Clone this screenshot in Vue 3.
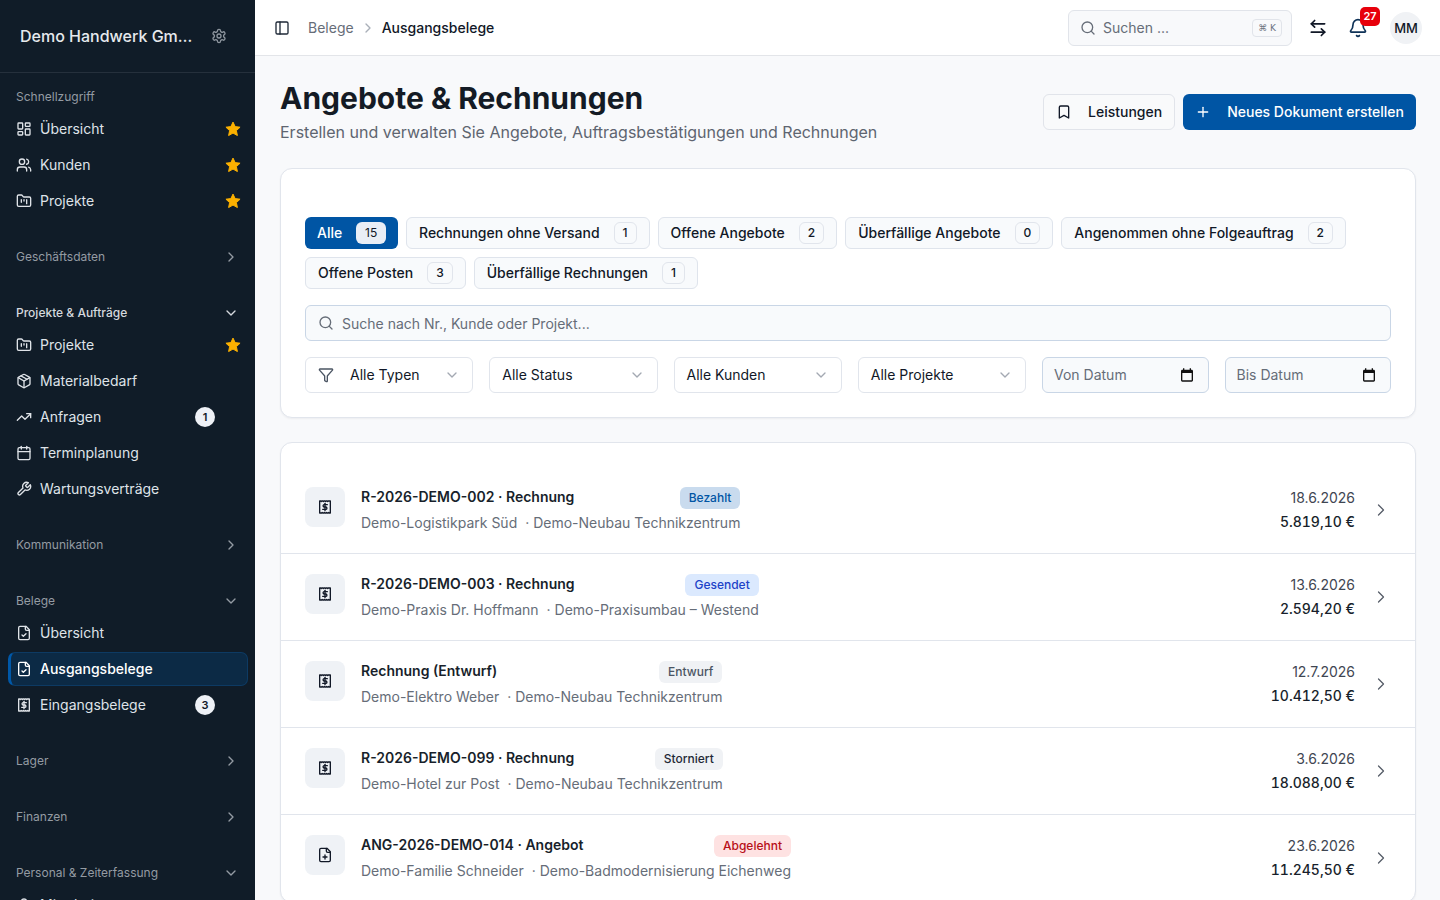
<script setup>
import { h } from 'vue'

const P = {
  dashboard: ['M4 3h5a1 1 0 0 1 1 1v7a1 1 0 0 1-1 1H4a1 1 0 0 1-1-1V4a1 1 0 0 1 1-1z', 'M15 3h5a1 1 0 0 1 1 1v3a1 1 0 0 1-1 1h-5a1 1 0 0 1-1-1V4a1 1 0 0 1 1-1z', 'M15 12h5a1 1 0 0 1 1 1v7a1 1 0 0 1-1 1h-5a1 1 0 0 1-1-1v-7a1 1 0 0 1 1-1z', 'M4 16h5a1 1 0 0 1 1 1v3a1 1 0 0 1-1 1H4a1 1 0 0 1-1-1v-3a1 1 0 0 1 1-1z'],
  users: ['M16 21v-2a4 4 0 0 0-4-4H6a4 4 0 0 0-4 4v2', 'M5 7a4 4 0 1 0 8 0a4 4 0 1 0-8 0', 'M22 21v-2a4 4 0 0 0-3-3.87', 'M16 3.13a4 4 0 0 1 0 7.75'],
  folder: ['M4 20h16a2 2 0 0 0 2-2V8a2 2 0 0 0-2-2h-7.93a2 2 0 0 1-1.66-.9l-.82-1.2A2 2 0 0 0 7.93 3H4a2 2 0 0 0-2 2v13c0 1.1.9 2 2 2Z', 'M8 10v4', 'M12 10v2', 'M16 10v6'],
  gear: ['M12.22 2h-.44a2 2 0 0 0-2 2v.18a2 2 0 0 1-1 1.73l-.43.25a2 2 0 0 1-2 0l-.15-.08a2 2 0 0 0-2.73.73l-.22.38a2 2 0 0 0 .73 2.73l.15.1a2 2 0 0 1 1 1.72v.51a2 2 0 0 1-1 1.74l-.15.09a2 2 0 0 0-.73 2.73l.22.38a2 2 0 0 0 2.73.73l.15-.08a2 2 0 0 1 2 0l.43.25a2 2 0 0 1 1 1.73V20a2 2 0 0 0 2 2h.44a2 2 0 0 0 2-2v-.18a2 2 0 0 1 1-1.73l.43-.25a2 2 0 0 1 2 0l.15.08a2 2 0 0 0 2.73-.73l.22-.39a2 2 0 0 0-.73-2.73l-.15-.08a2 2 0 0 1-1-1.74v-.5a2 2 0 0 1 1-1.74l.15-.09a2 2 0 0 0 .73-2.73l-.22-.38a2 2 0 0 0-2.73-.73l-.15.08a2 2 0 0 1-2 0l-.43-.25a2 2 0 0 1-1-1.73V4a2 2 0 0 0-2-2z', 'M9 12a3 3 0 1 0 6 0a3 3 0 1 0-6 0'],
  pkg: ['M11 21.73a2 2 0 0 0 2 0l7-4A2 2 0 0 0 21 16V8a2 2 0 0 0-1-1.73l-7-4a2 2 0 0 0-2 0l-7 4A2 2 0 0 0 3 8v8a2 2 0 0 0 1 1.73z', 'M12 22V12', 'm3.3 7 8.7 5 8.7-5', 'm7.5 4.27 9 5.15'],
  trend: ['M22 7 13.5 15.5 8.5 10.5 2 17', 'M16 7h6v6'],
  calendar: ['M8 2v4', 'M16 2v4', 'M5 4h14a2 2 0 0 1 2 2v14a2 2 0 0 1-2 2H5a2 2 0 0 1-2-2V6a2 2 0 0 1 2-2z', 'M3 10h18'],
  wrench: ['M14.7 6.3a1 1 0 0 0 0 1.4l1.6 1.6a1 1 0 0 0 1.4 0l3.77-3.77a6 6 0 0 1-7.94 7.94l-6.91 6.91a2.12 2.12 0 0 1-3-3l6.91-6.91a6 6 0 0 1 7.94-7.94l-3.76 3.76z'],
  filecheck: ['M15 2H6a2 2 0 0 0-2 2v16a2 2 0 0 0 2 2h12a2 2 0 0 0 2-2V7Z', 'M14 2v4a2 2 0 0 0 2 2h4', 'm9 15 2 2 4-4'],
  fileplus: ['M15 2H6a2 2 0 0 0-2 2v16a2 2 0 0 0 2 2h12a2 2 0 0 0 2-2V7Z', 'M14 2v4a2 2 0 0 0 2 2h4', 'M9 15h6', 'M12 18v-6'],
  receipt: ['M4 3h1.6l.8.8.8-.8h1.6l.8.8.8-.8h1.6l.8.8.8-.8h1.6l.8.8.8-.8H20v18h-1.6l-.8-.8-.8.8h-1.6l-.8-.8-.8.8h-1.6l-.8-.8-.8.8H8.6l-.8-.8-.8.8H4z', 'M12 6.5v11', 'M15.5 8.5H10.5a1.8 1.8 0 0 0 0 3.5h3a1.8 1.8 0 0 1 0 3.5H8.5'],
  user: ['M19 21v-2a4 4 0 0 0-4-4H9a4 4 0 0 0-4 4v2', 'M8 7a4 4 0 1 0 8 0a4 4 0 1 0-8 0'],
  panel: ['M5 3h14a2 2 0 0 1 2 2v14a2 2 0 0 1-2 2H5a2 2 0 0 1-2-2V5a2 2 0 0 1 2-2z', 'M9 3v18'],
  swap: ['M8 3 4 7l4 4', 'M4 7h16', 'm16 21 4-4-4-4', 'M20 17H4'],
  bell: ['M10.268 21a2 2 0 0 0 3.464 0', 'M3.262 15.326A1 1 0 0 0 4 17h16a1 1 0 0 0 .74-1.673C19.41 13.956 18 12.499 18 8A6 6 0 0 0 6 8c0 4.499-1.411 5.956-2.738 7.326'],
  search: ['M3 11a8 8 0 1 0 16 0a8 8 0 1 0-16 0', 'm21 21-4.3-4.3'],
  bookmark: ['m19 21-7-4-7 4V5a2 2 0 0 1 2-2h10a2 2 0 0 1 2 2v16z'],
  plus: ['M5 12h14', 'M12 5v14'],
  funnel: ['M10 20a1 1 0 0 0 .553.895l2 1A1 1 0 0 0 14 21v-7a2 2 0 0 1 .517-1.341L21.74 4.67A1 1 0 0 0 21 3H3a1 1 0 0 0-.742 1.67l7.225 7.989A2 2 0 0 1 10 14z'],
  right: ['m9 18 6-6-6-6'],
  down: ['m6 9 6 6 6-6'],
}

const Icon = (props) =>
  h('svg', { viewBox: '0 0 24 24', width: props.size || 16, height: props.size || 16, fill: 'none', stroke: 'currentColor', 'stroke-width': props.sw || 2, 'stroke-linecap': 'round', 'stroke-linejoin': 'round', style: { flex: 'none', display: 'block' } },
    P[props.name].map((d) => h('path', { d })))
Icon.props = ['name', 'size', 'sw']

const groups = [
  { label: 'Schnellzugriff', first: true, plain: true, items: [
    { icon: 'dashboard', text: 'Übersicht', star: true },
    { icon: 'users', text: 'Kunden', star: true },
    { icon: 'folder', text: 'Projekte', star: true },
  ] },
  { label: 'Geschäftsdaten', items: [] },
  { label: 'Projekte & Aufträge', open: true, bright: true, items: [
    { icon: 'folder', text: 'Projekte', star: true },
    { icon: 'pkg', text: 'Materialbedarf' },
    { icon: 'trend', text: 'Anfragen', badge: 1 },
    { icon: 'calendar', text: 'Terminplanung' },
    { icon: 'wrench', text: 'Wartungsverträge' },
  ] },
  { label: 'Kommunikation', items: [] },
  { label: 'Belege', open: true, items: [
    { icon: 'filecheck', text: 'Übersicht' },
    { icon: 'filecheck', text: 'Ausgangsbelege', active: true },
    { icon: 'receipt', text: 'Eingangsbelege', badge: 3 },
  ] },
  { label: 'Lager', items: [] },
  { label: 'Finanzen', items: [] },
  { label: 'Personal & Zeiterfassung', open: true, items: [
    { icon: 'user', text: 'Mitarbeiter' },
  ] },
]

const tabs = [
  { text: 'Alle', n: 15, active: true },
  { text: 'Rechnungen ohne Versand', n: 1 },
  { text: 'Offene Angebote', n: 2 },
  { text: 'Überfällige Angebote', n: 0 },
  { text: 'Angenommen ohne Folgeauftrag', n: 2 },
  { text: 'Offene Posten', n: 3 },
  { text: 'Überfällige Rechnungen', n: 1 },
]

const selects = [
  { text: 'Alle Typen', funnel: true },
  { text: 'Alle Status' },
  { text: 'Alle Kunden' },
  { text: 'Alle Projekte' },
]

const rows = [
  { icon: 'receipt', title: 'R-2026-DEMO-002 · Rechnung', status: 'Bezahlt', kind: 'paid', customer: 'Demo-Logistikpark Süd', project: 'Demo-Neubau Technikzentrum', date: '18.6.2026', amount: '5.819,10 €' },
  { icon: 'receipt', title: 'R-2026-DEMO-003 · Rechnung', status: 'Gesendet', kind: 'sent', customer: 'Demo-Praxis Dr. Hoffmann', project: 'Demo-Praxisumbau – Westend', date: '13.6.2026', amount: '2.594,20 €' },
  { icon: 'receipt', title: 'Rechnung (Entwurf)', status: 'Entwurf', kind: 'draft', customer: 'Demo-Elektro Weber', project: 'Demo-Neubau Technikzentrum', date: '12.7.2026', amount: '10.412,50 €' },
  { icon: 'receipt', title: 'R-2026-DEMO-099 · Rechnung', status: 'Storniert', kind: 'void', customer: 'Demo-Hotel zur Post', project: 'Demo-Neubau Technikzentrum', date: '3.6.2026', amount: '18.088,00 €' },
  { icon: 'fileplus', title: 'ANG-2026-DEMO-014 · Angebot', status: 'Abgelehnt', kind: 'rejected', customer: 'Demo-Familie Schneider', project: 'Demo-Badmodernisierung Eichenweg', date: '23.6.2026', amount: '11.245,50 €' },
]
</script>

<template>
  <div class="app">
    <aside class="side">
      <div class="brand">
        <span class="brand-name">Demo Handwerk GmbH</span>
        <Icon name="gear" class="brand-gear" />
      </div>
      <nav class="nav">
        <section v-for="g in groups" :key="g.label" class="group" :class="{ closed: !g.items.length, first: g.first }">
          <div class="glabel" :class="{ bright: g.bright }">
            <span>{{ g.label }}</span>
            <Icon v-if="!g.plain" :name="g.open ? 'down' : 'right'" />
          </div>
          <div v-if="g.items.length" class="items">
            <a v-for="it in g.items" :key="it.text" class="item" :class="{ active: it.active }">
              <Icon :name="it.icon" />
              <span class="item-text">{{ it.text }}</span>
              <span v-if="it.badge" class="nav-badge">{{ it.badge }}</span>
              <svg v-if="it.star" class="star" viewBox="0 0 24 24" width="16" height="16"><path d="M12 1.6l3.2 6.8 7.4.9-5.5 5.1 1.5 7.4L12 18.1l-6.6 3.7 1.5-7.4L1.400 9.300l7.4-.9z" fill="#fbb000" stroke="#fbb000" stroke-width="1.500" stroke-linejoin="round"/></svg>
            </a>
          </div>
        </section>
      </nav>
    </aside>

    <div class="main">
      <header class="top">
        <span class="panel-btn"><Icon name="panel" /></span>
        <span class="crumb">Belege</span>
        <Icon name="right" class="crumb-sep" />
        <span class="crumb current">Ausgangsbelege</span>
        <div class="top-right">
          <div class="gsearch">
            <Icon name="search" class="gsearch-ic" />
            <span class="gsearch-text">Suchen ...</span>
            <kbd>⌘ K</kbd>
          </div>
          <span class="swap"><Icon name="swap" :size="20" /></span>
          <span class="bell">
            <Icon name="bell" :size="20" />
            <b class="bell-count">27</b>
          </span>
          <span class="avatar">MM</span>
        </div>
      </header>

      <main class="content">
        <div class="head">
          <div>
            <h1>Angebote &amp; Rechnungen</h1>
            <p>Erstellen und verwalten Sie Angebote, Auftragsbestätigungen und Rechnungen</p>
          </div>
          <div class="actions">
            <button class="btn ghost"><Icon name="bookmark" /><span>Leistungen</span></button>
            <button class="btn primary"><Icon name="plus" /><span>Neues Dokument erstellen</span></button>
          </div>
        </div>

        <section class="card filters">
          <div class="tabs">
            <button v-for="t in tabs" :key="t.text" class="tab" :class="{ active: t.active }">
              <span>{{ t.text }}</span>
              <span class="count">{{ t.n }}</span>
            </button>
          </div>
          <div class="search">
            <Icon name="search" class="search-ic" />
            <span class="search-text">Suche nach Nr., Kunde oder Projekt...</span>
          </div>
          <div class="fgrid">
            <div v-for="s in selects" :key="s.text" class="select">
              <Icon v-if="s.funnel" name="funnel" class="funnel" />
              <span class="select-text">{{ s.text }}</span>
              <Icon name="down" class="select-chev" />
            </div>
            <div v-for="d in ['Von Datum', 'Bis Datum']" :key="d" class="date">
              <span>{{ d }}</span>
              <svg viewBox="0 0 24 24" width="16" height="16" fill="#111"><path d="M19 4h-1V2h-2v2H8V2H6v2H5c-1.110 0-2 .9-2 2v14a2 2 0 0 0 2 2h14c1.100 0 2-.9 2-2V6c0-1.100-.9-2-2-2zm0 16H5V9h14v11z"/></svg>
            </div>
          </div>
        </section>

        <section class="card list">
          <article v-for="r in rows" :key="r.title" class="row">
            <span class="doc"><Icon :name="r.icon" /></span>
            <div class="info">
              <div class="line1">
                <span class="title">{{ r.title }}</span>
                <span class="pill" :class="r.kind">{{ r.status }}</span>
              </div>
              <div class="sub"><span>{{ r.customer }}</span><span>· {{ r.project }}</span></div>
            </div>
            <div class="amount">
              <span class="date-t">{{ r.date }}</span>
              <span class="sum">{{ r.amount }}</span>
            </div>
            <Icon name="right" :size="20" :sw="1.5" class="row-chev" />
          </article>
        </section>
      </main>
    </div>
  </div>
</template>

<style>
html, body { margin: 0; height: 100%; overflow: hidden; }
</style>

<style scoped>
.app { display: flex; width: 1440px; height: 900px; overflow: hidden; font-family: Inter, "Liberation Sans", sans-serif; font-size: 14px; line-height: 20px; color: #111827; background: #f8f9fb; }
.side { width: 255px; flex: none; background: #101c28; color: #dfe3e8; overflow: hidden; }
.brand { height: 72px; display: flex; align-items: center; padding: 0 28px 0 20px; gap: 18px; border-bottom: 1px solid #25303c; }
.brand-name { width: 173px; white-space: nowrap; overflow: hidden; text-overflow: ellipsis; font-size: 16px; font-weight: 500; color: #e6e9ed; }
.brand-gear { color: #8d959e; }
.nav { padding: 8px 7px 0 8px; display: flex; flex-direction: column; gap: 24px; }
.group.closed { padding-bottom: 2px; }
.group.first { padding-top: 1px; }
.glabel { height: 30px; display: flex; align-items: center; justify-content: space-between; padding: 0 9px 0 8px; font-size: 12px; color: #949ba3; }
.glabel.bright { color: #d5d9de; font-weight: 500; }
.items { display: flex; flex-direction: column; gap: 2px; }
.item { height: 34px; box-sizing: border-box; display: flex; align-items: center; gap: 8px; padding: 0 6px 0 7px; border: 1px solid transparent; border-radius: 7px; color: #dfe3e8; }
.item.active { background: #0c2a45; border-color: #0d3a63; border-left: 3px solid #0058a8; padding-left: 5px; color: #fff; font-weight: 500; }
.item-text { flex: 1; white-space: nowrap; }
.nav-badge { width: 20px; height: 20px; border-radius: 50%; background: #eef1f6; color: #111827; font-size: 11px; font-weight: 600; display: flex; align-items: center; justify-content: center; margin-right: 26px; }
.star { flex: none; }
.main { width: 1185px; flex: none; display: flex; flex-direction: column; overflow: hidden; }
.top { height: 55px; flex: none; background: #fff; border-bottom: 1px solid #e3e5e9; display: flex; align-items: center; padding: 0 18px 0 19px; }
.panel-btn { margin-right: 18px; color: #1f2937; }
.crumb { color: #666d78; }
.crumb-sep { color: #a9afb8; margin: 0 6px; }
.crumb.current { color: #111827; font-weight: 500; }
.top-right { margin-left: auto; display: flex; align-items: center; }
.gsearch { width: 224px; height: 36px; box-sizing: border-box; display: flex; align-items: center; padding: 0 9px 0 11px; background: #f8f9fb; border: 1px solid #e1e4ea; border-radius: 6px; color: #666d78; }
.gsearch-ic { margin-right: 7px; }
.gsearch-text { flex: 1; }
kbd { height: 18px; box-sizing: border-box; padding: 0 5px; border: 1px solid #e1e4ea; border-radius: 4px; display: flex; align-items: center; font-family: "DejaVu Sans", sans-serif; font-size: 9px; color: #6b7280; background: #f8f9fb; }
.swap { margin-left: 16px; color: #111827; }
.bell { margin-left: 20px; color: #0f3257; position: relative; display: block; }
.bell-count { position: absolute; left: 12px; top: -11px; width: 20px; height: 19px; border-radius: 5px; background: #e7000b; color: #fff; font-size: 11px; font-weight: 600; display: flex; align-items: center; justify-content: center; }
.avatar { margin-left: 22px; width: 32px; height: 32px; border-radius: 50%; background: #f0f2f5; font-size: 13px; font-weight: 500; color: #111827; display: flex; align-items: center; justify-content: center; }
.content { padding: 24px 24px 0 25px; flex: 1; overflow: hidden; }
.head { display: flex; justify-content: space-between; align-items: center; margin-bottom: 24px; }
h1 { margin: 0 0 4px; font-size: 30px; line-height: 36px; font-weight: 700; color: #141b25; }
.head p { margin: 0; font-size: 16px; line-height: 24px; color: #5e6570; }
.actions { display: flex; gap: 8px; }
.btn { height: 36px; box-sizing: border-box; display: flex; align-items: center; border-radius: 6px; font-family: inherit; font-size: 14px; line-height: 20px; font-weight: 500; padding: 0 12px; gap: 16px; cursor: pointer; }
.btn.ghost { background: #f9fafb; border: 1px solid #e1e4ea; color: #111827; }
.btn.primary { background: #0055a4; border: 0; color: #fff; }
.card { background: #fff; border: 1px solid #e1e5ec; border-radius: 12px; box-shadow: 0 1px 2px rgba(16, 24, 40, .05); }
.filters { padding: 48px 24px 24px; margin-bottom: 24px; }
.tabs { display: flex; flex-wrap: wrap; gap: 8px; }
.tab { height: 32px; box-sizing: border-box; display: flex; align-items: center; gap: 14px; padding: 0 12px; background: #f8fafc; border: 1px solid #dfe4ec; border-radius: 6px; font-family: inherit; font-size: 14px; line-height: 20px; font-weight: 500; color: #111827; }
.tab.active { background: #0055a4; border: 0; color: #fff; gap: 14px; padding: 0 12px; width: 93px; justify-content: space-between; }
.count { height: 22px; box-sizing: border-box; padding: 0 8px; border: 1px solid #e1e5ec; border-radius: 6px; display: flex; align-items: center; justify-content: center; font-size: 12px; color: #111827; background: #f8fafc; }
.tab.active .count { background: #e9eef6; border: 0; font-weight: 400; width: 30px; padding: 0; }
.search { margin-top: 16px; height: 36px; box-sizing: border-box; display: flex; align-items: center; gap: 8px; padding: 0 12px; background: #f8fafc; border: 1px solid #c9d6e6; border-radius: 6px; color: #666d78; }
.search-ic { color: #666d78; }
.search-text { padding-top: 1px; }
.fgrid { margin-top: 16px; display: grid; grid-template-columns: repeat(4, 168.25px) repeat(2, 166.5px); gap: 16px; }
.select, .date { height: 36px; box-sizing: border-box; display: flex; align-items: center; padding: 0 12px; border-radius: 6px; }
.select { background: #fff; border: 1px solid #e1e5ec; color: #111827; }
.funnel { margin-right: 16px; color: #4b5563; }
.select-text { flex: 1; }
.select-chev { color: #a3a9b2; }
.date { background: #f8fafc; border: 1px solid #c9d6e6; color: #666d78; justify-content: space-between; padding: 0 13px 0 11px; }
.list { padding-top: 24px; }
.row { height: 87px; box-sizing: border-box; display: flex; align-items: center; padding: 0 24px; border-bottom: 1px solid #e1e5ec; }
.doc { width: 40px; height: 40px; flex: none; align-self: flex-start; margin: 20px 16px 0 0; display: flex; align-items: center; justify-content: center; background: #eff2f6; border-radius: 8px; color: #111827; }
.info { display: inline-flex; flex-direction: column; gap: 3px; align-self: flex-start; margin-top: 20px; }
.line1 { display: flex; align-items: flex-start; justify-content: space-between; height: 22px; }
.title { font-weight: 600; color: #181f2b; }
.pill { height: 22px; display: flex; align-items: center; padding: 0 9px; border-radius: 6px; font-size: 12px; font-weight: 500; }
.paid { background: #c9dbee; color: #0055a4; }
.sent { background: #dbe9fe; color: #1d43c8; }
.draft, .void { background: #f0f2f5; }
.draft { color: #4b5563; }
.void { color: #1f2937; }
.rejected { background: #fee2e2; color: #b80f18; }
.sub { display: flex; gap: 8px; color: #666d78; line-height: 22px; white-space: nowrap; }
.amount { margin-left: auto; display: flex; flex-direction: column; align-items: flex-end; gap: 4px; line-height: 20px; }
.date-t { color: #3f4652; }
.sum { font-weight: 500; color: #181f2b; font-variant-numeric: tabular-nums; }
.row-chev { margin-left: 16px; color: #555c67; }
</style>
